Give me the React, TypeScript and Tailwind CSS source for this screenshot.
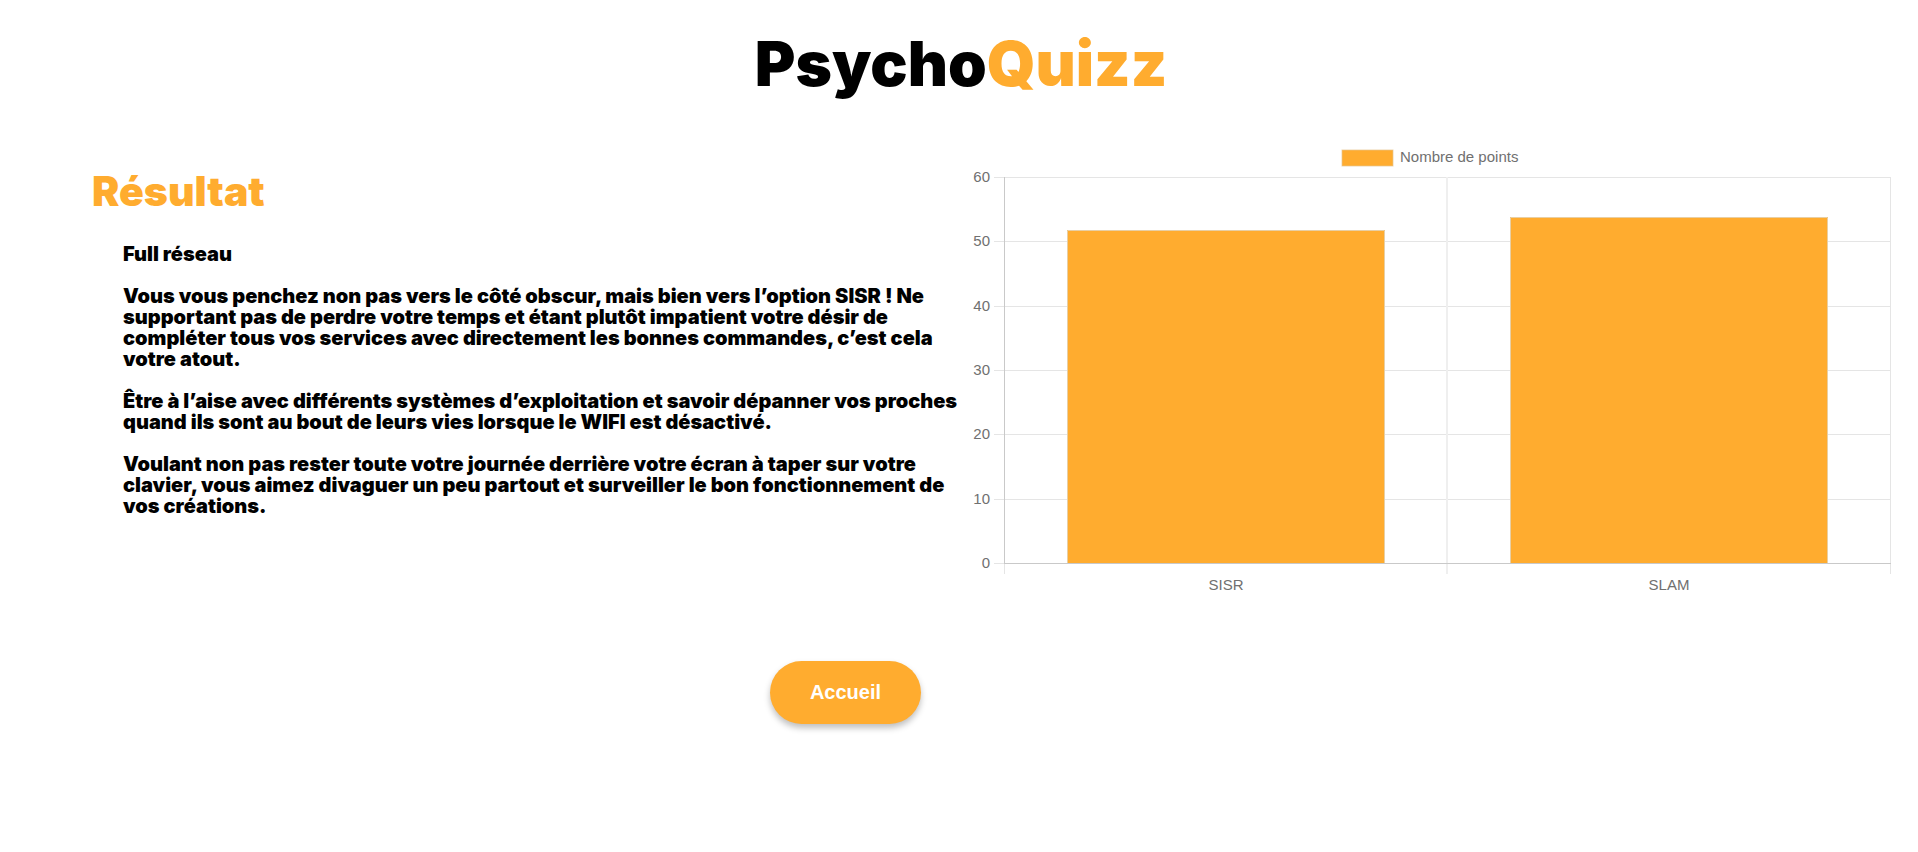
const ORANGE = "#ffac2f";

const paragraphs: string[][] = [
  ["Full réseau"],
  [
    "Vous vous penchez non pas vers le côté obscur, mais bien vers l’option SISR ! Ne",
    "supportant pas de perdre votre temps et étant plutôt impatient votre désir de",
    "compléter tous vos services avec directement les bonnes commandes, c’est cela",
    "votre atout.",
  ],
  [
    "Être à l’aise avec différents systèmes d’exploitation et savoir dépanner vos proches",
    "quand ils sont au bout de leurs vies lorsque le WIFI est désactivé.",
  ],
  [
    "Voulant non pas rester toute votre journée derrière votre écran à taper sur votre",
    "clavier, vous aimez divaguer un peu partout et surveiller le bon fonctionnement de",
    "vos créations.",
  ],
];

const scores = [
  { label: "SISR", x: 108, top: 96, center: 267 },
  { label: "SLAM", x: 551, top: 83, center: 710 },
];

const ticks = [
  { value: 60, y: 43 },
  { value: 50, y: 107 },
  { value: 40, y: 172 },
  { value: 30, y: 236 },
  { value: 20, y: 300 },
  { value: 10, y: 365 },
];

function ScoreChart() {
  return (
    <svg
      viewBox="0 0 959 480"
      className="block w-full"
      role="img"
      aria-label="Nombre de points"
      fontFamily="'Liberation Sans', Arial, sans-serif"
      fontSize="15"
      fill="#707070"
    >
      <rect x="383" y="16" width="51" height="16" fill={ORANGE} stroke="#e5c58f" strokeOpacity="0.7" />
      <text x="441" y="28">Nombre de points</text>
      {ticks.map((t) => (
        <g key={t.value}>
          <rect x="35" y={t.y} width="897" height="1" fill="#e5e5e5" />
          <text x="31" y={t.y + 5} textAnchor="end">{t.value}</text>
        </g>
      ))}
      <rect x="487" y="43" width="2" height="397" fill="#efefef" />
      <rect x="931" y="43" width="1" height="397" fill="#e5e5e5" />
      <rect x="45" y="429" width="1" height="11" fill="#e5e5e5" />
      <rect x="35" y="429" width="10" height="1" fill="#e5e5e5" />
      <text x="31" y="434" textAnchor="end">0</text>
      {scores.map((s) => (
        <g key={s.label}>
          <rect x={s.x} y={s.top} width="318" height={429 - s.top} fill={ORANGE} />
          <path
            d={`M${s.x + 0.5} 429V${s.top + 0.5}h317V429`}
            fill="none"
            stroke="#e8cfa4"
          />
          <text x={s.center} y="456" textAnchor="middle">{s.label}</text>
        </g>
      ))}
      <rect x="45" y="43" width="1" height="387" fill="#c9c9c9" />
      <rect x="45" y="429" width="887" height="1" fill="#c9c9c9" />
    </svg>
  );
}

export default function App() {
  return (
    <div className="min-h-screen bg-white font-[Inter,sans-serif] text-black">
      <header className="flex justify-center pt-[30px] pl-1">
        <h1 className="text-[62px] leading-[68px] font-black">
          Psycho<span className="text-[#ffac2f]">Quizz</span>
        </h1>
      </header>
      <main>
        <div className="grid grid-cols-2 pt-9">
          <section className="pt-9 pl-[92px]">
            <h2 className="text-[41px] leading-[42px] font-black text-[#ffac2f]">Résultat</h2>
            <div className="flex flex-col gap-[21px] pt-8 pl-[31px] text-[20px] leading-[21px] font-black whitespace-nowrap">
              {paragraphs.map((lines) => (
                <p key={lines[0]}>
                  {lines.map((line) => (
                    <span key={line} className="block">{line}</span>
                  ))}
                </p>
              ))}
            </div>
          </section>
          <ScoreChart />
        </div>
        <div className="flex justify-center pt-[47px] pr-[227px]">
          <button
            type="button"
            className="rounded-full bg-[#ffac2f] px-10 py-4 font-['Liberation_Sans',Arial,sans-serif] text-[20px] leading-[31px] font-bold text-white shadow-[0_4px_6px_rgba(0,0,0,0.25)]"
          >
            Accueil
          </button>
        </div>
      </main>
    </div>
  );
}
